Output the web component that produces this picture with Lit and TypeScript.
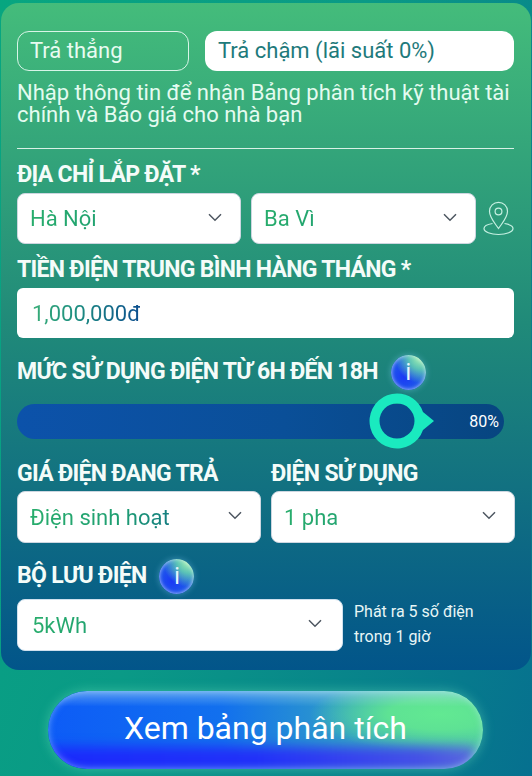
import { LitElement, html, css, svg } from "lit";
import { customElement } from "lit/decorators.js";

const chevron = html`<svg class="chev" viewBox="0 0 14 9" width="14" height="9"><path d="M1 1.200 7 7.200l6-6" fill="none" stroke="#4d5660" stroke-width="1.500"/></svg>`;
const info = html`<span class="info"><span class="i">i</span></span>`;
const pin = svg`<path d="M15.500 27.500C11 21 6.500 16.500 6.500 10.300a9 9 0 0 1 18 0C24.500 16.500 20 21 15.500 27.500Z" fill="none" stroke="#c6f0e2" stroke-width="1.200"/><circle cx="15.500" cy="10.500" r="3.400" fill="none" stroke="#c6f0e2" stroke-width="1.200"/><path d="M9.500 22.500C4.500 23.300 1 25 1 27.500c0 3.300 6.500 6 14.500 6S30 30.800 30 27.500c0-2.500-3.500-4.200-8.500-5" fill="none" stroke="#c6f0e2" stroke-width="1.200"/>`;
const thumb = svg`<path fill-rule="evenodd" fill="#1aeabf" d="M28 .5a27.500 27.500 0 0 1 26 18.500L65 28l-11 9A27.500 27.500 0 1 1 28 .5Zm0 10a17.500 17.500 0 1 0 0 35 17.500 17.500 0 0 0 0-35Z"/>`;

@customElement("app-root")
export class AppRoot extends LitElement {
  static styles = css`
    :host {
      display: block;
      width: 532px;
      height: 776px;
      overflow: hidden;
      box-sizing: border-box;
      padding-top: 3px;
      font-family: Roboto, "Noto Sans", sans-serif;
      background: linear-gradient(110deg, #07a680 0%, #0a9a86 45%, #06708f 100%);
    }
    .panel {
      box-sizing: border-box;
      margin: 0 1px;
      height: 667px;
      padding: 28px 16px 0;
      border-radius: 18px;
      background: linear-gradient(180deg, #44bc7b 0%, #208a79 48%, #02558a 100%);
    }
    .tabs { display: flex; gap: 16px; width: 497px; }
    .tab {
      box-sizing: border-box;
      height: 40px;
      border-radius: 12px;
      padding: 0 0 2px 13px;
      display: flex;
      align-items: center;
      font-size: 22px;
    }
    .tab.off { width: 172px; border: 1px solid #d8f5e8; color: #e8fbf1; padding-left: 12px; }
    .tab.on { flex: 1; background: #fff; color: #1e7a7b; }
    .desc {
      margin: 11px 0 0;
      width: 497px;
      font-size: 22px;
      line-height: 22px;
      color: #e4fbf0;
    }
    .rule { height: 1px; background: #d8f1e6; margin: 22px 0 0; width: 497px; }
    .label {
      box-sizing: border-box;
      display: flex;
      align-items: center;
      height: 34px;
      padding-top: 2px;
      font-size: 23px;
      font-weight: 700;
      letter-spacing: -0.7px;
      color: #f4fcf9;
      white-space: nowrap;
    }
    .l1 { margin-top: 7px; }
    .l2 { margin-top: 7px; }
    .row { display: flex; align-items: center; }
    .field {
      box-sizing: border-box;
      height: 51px;
      display: flex;
      align-items: center;
      justify-content: space-between;
      padding: 0 18px 0 12px;
      background: #fff;
      border: 1px solid #cdd6e0;
      border-radius: 8px;
      font-size: 22px;
    }
    .val {
      background: linear-gradient(100deg, #28ad6c 0, #1f9f72 90px, #0f6a8a 170px);
      -webkit-background-clip: text;
      background-clip: text;
      color: transparent;
    }
    .chev { flex: none; margin-top: -3px; }
    .addr { margin-top: 3px; gap: 10px; }
    .addr .field { width: 224px; }
    .addr .field + .field { width: 225px; }
    .addr .pinwrap { width: 31px; height: 35px; margin-left: -3px; margin-top: -1px; }
    .amount {
      box-sizing: border-box;
      width: 497px;
      height: 50px;
      margin-top: 3px;
      display: flex;
      align-items: center;
      padding-left: 15px;
      background: #fff;
      border-radius: 6px;
      font-size: 22px;
    }
    .amount .val { background-image: linear-gradient(90deg, #3aae78 0, #1d8f80 40%, #0d4f8f 100%); }
    .l3 { margin-top: 15px; }
    .l3 .info { margin-left: 13px; }
    .info {
      flex: none;
      margin-top: 2px;
      letter-spacing: 0;
      width: 35px;
      height: 35px;
      border-radius: 50%;
      display: flex;
      align-items: center;
      justify-content: center;
      background:
        radial-gradient(circle at 84% 8%, #a4efb0 0, rgba(105, 220, 170, 0.8) 26%, rgba(40, 120, 220, 0) 58%),
        radial-gradient(circle at 38% 62%, #1a38f6 0, #1e58ea 48%, #3a94dc 100%);
      box-shadow: inset 0 0 4px rgba(255, 255, 255, 0.75), 0 0 6px rgba(140, 215, 255, 0.4);
    }
    .i { font-size: 23px; font-weight: 400; color: #e6f5ff; line-height: 1; }
    .slider {
      position: relative;
      margin-top: 17px;
      width: 487px;
      height: 35px;
      border-radius: 18px;
      background: linear-gradient(90deg, #0c52aa 0%, #0a4f98 55%, #074580 100%);
      display: flex;
      align-items: center;
      justify-content: flex-end;
      padding-right: 5px;
      box-sizing: border-box;
      color: #fff;
      font-size: 16px;
    }
    .thumb { position: absolute; top: -11px; width: 66px; height: 56px; }
    .cols { display: grid; grid-template-columns: 244px 244px; gap: 10px; margin-top: 16px; }
    .cols .field { height: 52px; margin-top: 2px; }
    .l5 { margin-top: 14px; }
    .l5 .info { margin-left: 13px; }
    .store { margin-top: 8px; gap: 11px; }
    .store .field { width: 326px; height: 52px; padding: 0 20px 0 14px; border-color: #cfe0ee; }
    .note { font-size: 16px; line-height: 25px; color: #e8f6f6; white-space: nowrap; margin-top: -2px; }
    .cta-wrap { display: flex; justify-content: center; margin-top: 21px; }
    .cta {
      position: relative;
      overflow: hidden;
      box-sizing: border-box;
      width: 435px;
      height: 78px;
      margin-left: -1px;
      border-radius: 39px;
      display: flex;
      align-items: center;
      justify-content: center;
      padding-bottom: 4px;
      color: #fff;
      font-size: 32px;
      background:
        radial-gradient(ellipse 130px 38px at 90% 30%, #62e992 0, #5ee294 40%, rgba(90, 220, 160, 0) 100%),
        linear-gradient(90deg, #0d5cf7 0%, #1270ee 40%, #2f9cc8 68%, #4cc8a8 100%);
      box-shadow: 0 0 12px rgba(110, 230, 190, 0.45);
    }
    .band {
      position: absolute;
      left: -10px;
      right: 8px;
      bottom: -3px;
      height: 25px;
      background: linear-gradient(90deg, #1a2afc 0%, #2230f8 50%, #4650e6 88%, #5a6adc 100%);
      filter: blur(6px);
    }
    .gloss {
      position: absolute;
      inset: 0;
      border-radius: 39px;
      background: linear-gradient(180deg, rgba(185, 232, 240, 0.45) 0, rgba(160, 220, 235, 0) 20%);
      box-shadow: inset 0 0 7px rgba(195, 238, 255, 0.5);
    }
    .cta-text { position: relative; }
  `;

  render() {
    return html`
      <div class="panel">
        <div class="tabs">
          <div class="tab off">Trả thẳng</div>
          <div class="tab on">Trả chậm (lãi suất 0%)</div>
        </div>
        <p class="desc">Nhập thông tin để nhận Bảng phân tích kỹ thuật tài chính và Báo giá cho nhà bạn</p>
        <div class="rule"></div>
        <div class="label l1">ĐỊA CHỈ LẮP ĐẶT *</div>
        <div class="row addr">
          <div class="field"><span class="val">Hà Nội</span>${chevron}</div>
          <div class="field"><span class="val">Ba Vì</span>${chevron}</div>
          <svg class="pinwrap" viewBox="0 0 31 35">${pin}</svg>
        </div>
        <div class="label l2">TIỀN ĐIỆN TRUNG BÌNH HÀNG THÁNG *</div>
        <div class="amount"><span class="val">1,000,000đ</span></div>
        <div class="label l3">MỨC SỬ DỤNG ĐIỆN TỪ 6H ĐẾN 18H ${info}</div>
        <div class="slider">
          <svg class="thumb" style="left:${(80 / 100) * 427 + 10}px" viewBox="0 0 66 56">${thumb}</svg>
          80%
        </div>
        <div class="cols">
          <div>
            <div class="label">GIÁ ĐIỆN ĐANG TRẢ</div>
            <div class="field"><span class="val">Điện sinh hoạt</span>${chevron}</div>
          </div>
          <div>
            <div class="label">ĐIỆN SỬ DỤNG</div>
            <div class="field"><span class="val">1 pha</span>${chevron}</div>
          </div>
        </div>
        <div class="label l5">BỘ LƯU ĐIỆN ${info}</div>
        <div class="row store">
          <div class="field"><span class="val">5kWh</span>${chevron}</div>
          <div class="note">Phát ra 5 số điện<br />trong 1 giờ</div>
        </div>
      </div>
      <div class="cta-wrap">
        <div class="cta">
          <span class="band"></span>
          <span class="gloss"></span>
          <span class="cta-text">Xem bảng phân tích</span>
        </div>
      </div>
    `;
  }
}
